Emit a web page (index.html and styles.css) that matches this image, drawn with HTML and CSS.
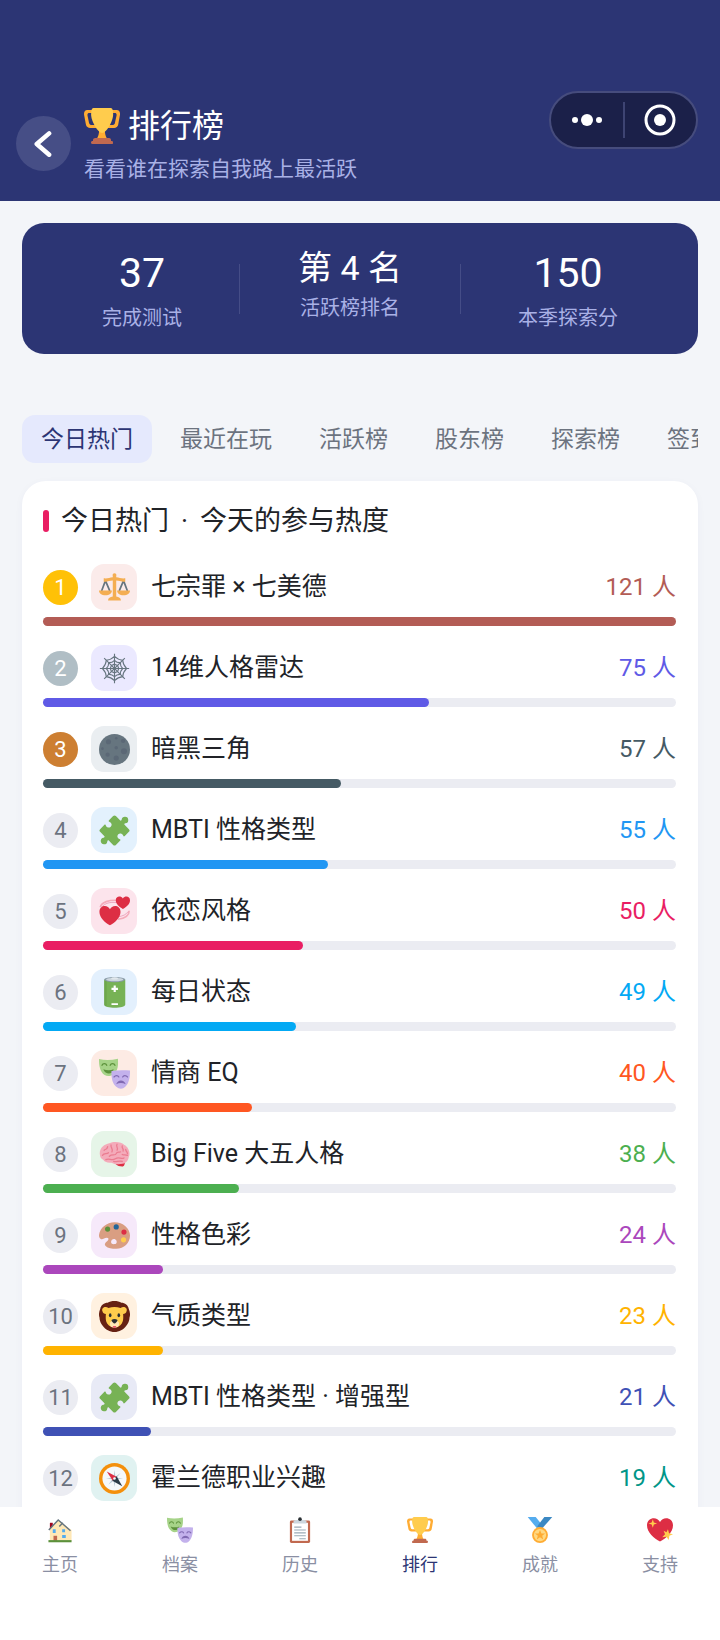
FILE: index.html
```html
<!DOCTYPE html>
<html lang="zh-CN">
<head>
    <meta charset="UTF-8">
    <meta name="viewport" content="width=device-width, initial-scale=1.0">
    <title>排行榜</title>
    <link rel="stylesheet" href="styles.css">
</head>
<body>
    <!-- Icon set -->
    <svg class="sprite" aria-hidden="true">
        <symbol id="trophy" viewBox="0 0 36 36">
            <path fill="#FFAC33" d="M5.123 5h6C12.227 5 13 4.896 13 6V4c0-1.104-.773-2-1.877-2h-8c-2 0-3.583 2.125-3 5 0 0 1.791 9.375 1.917 9.958C2.373 18.5 4.164 20 6.081 20h6.958c1.105 0-.039-1.896-.039-3v-2c0 1.104-.773 2-1.877 2h-4c-1.104 0-1.833-1.042-2-2S3.539 7.667 3.539 7.667C3.206 5.75 4.018 5 5.123 5zm25.812 0h-6C23.831 5 22 4.896 22 6V4c0-1.104 1.831-2 2.935-2h8c2 0 3.584 2.125 3 5 0 0-1.633 9.419-1.771 10-.354 1.5-2.042 3-4 3h-7.146C21.914 20 22 18.104 22 17v-2c0 1.104 1.831 2 2.935 2h4c1.104 0 1.834-1.042 2-2s1.584-7.333 1.584-7.333C32.851 5.75 32.04 5 30.935 5zM20.832 22c0-6.958-2.709 0-2.709 0s-3-6.958-3 0-3.291 10-3.291 10h12.292s-3.292-3.042-3.292-10z"/>
            <path fill="#FFCC4D" d="M29.123 6.577c0 6.775-6.77 18.423-11 18.423-4.231 0-11-11.649-11-18.423 0-5.577 1-6.577 3-6.577h16c2 0 3 .917 3 6.577z"/>
            <path fill="#C1694F" d="M27 33H9v-1c0-1.104 1.164-2 2.206-2h13.917c1.042 0 1.877.896 1.877 2zM8.500 33h19.250c.8 0 1.250.6 1.250 1.400 0 1 0 1.600-1.250 1.600H8.500C7.200 36 7 35.400 7 34.600 7 33.600 7.700 33 8.500 33z"/>
        </symbol>
        <symbol id="scales" viewBox="0 0 36 36">
            <path fill="none" stroke="#66757F" stroke-width="2" d="M7.500 10 3 22M7.500 10l5 12M28.500 10l-5 12M28.500 10 33 22"/>
            <path fill="#F4AE52" d="M16 4.500a2.200 2.200 0 1 1 4 0V6c4 .3 6 2 10.500 1.300v4C26 12 24 10 20 10v18.500c3 .4 5.500 1.600 5.500 4.500h-15c0-2.900 2.500-4.100 5.500-4.500V10c-4 0-6 2-10.500 1.300v-4C10 8 12 6.300 16 6zM0 21.500h15c0 3.500-3 5.500-7.500 5.500S0 25 0 21.500zM21 21.500h15c0 3.500-3 5.500-7.500 5.500s-7.500-2-7.500-5.500z"/>
        </symbol>
        <symbol id="web" viewBox="0 0 36 36">
            <g fill="none" stroke="#66757F" stroke-width="1.300">
                <path d="M18 1v34M1 18h34M6 6l24 24M30 6 6 30"/>
                <path d="M18 4q4 4 9.500 4.500Q28 14 32 18q-4 4-4.500 9.500Q22 28 18 32q-4-4-9.500-4.500Q8 22 4 18q4-4 4.500-9.500Q14 8 18 4z"/>
                <path d="M18 8.500q3 3 6.800 2.700Q24.500 15 27.500 18q-3 3-2.700 6.800Q21 24.500 18 27.500q-3-3-6.800-2.700Q11.500 21 8.500 18q3-3 2.700-6.800Q15 11.500 18 8.500z"/>
                <path d="m18 13 3.500 1.500L23 18l-1.500 3.500L18 23l-3.500-1.500L13 18l1.500-3.500z"/>
            </g>
        </symbol>
        <symbol id="moon" viewBox="0 0 36 36">
            <circle cx="18" cy="18" r="18" fill="#66757F"/>
            <g fill="#5B6876">
                <circle cx="11" cy="9" r="3"/><circle cx="20" cy="5" r="1.500"/><circle cx="28" cy="8" r="2.500"/>
                <circle cx="20" cy="16" r="2"/><circle cx="10" cy="24" r="2.500"/><circle cx="20" cy="28" r="3"/>
                <circle cx="29" cy="20" r="3.500"/><circle cx="4" cy="17" r="1.500"/>
            </g>
        </symbol>
        <symbol id="puzzle" viewBox="2 2 32 32">
            <path fill="#77B255" transform="rotate(45 18 18)" d="M8.500 6.500h6c1.200 0 1.400-.8.8-1.700a3.400 3.400 0 1 1 5.400 0c-.6.900-.4 1.700.8 1.700h6a2 2 0 0 1 2 2v6c0 1.200-.8 1.400-1.700.8a3 3 0 1 0 0 5.400c.9-.6 1.700-.4 1.700.8v6a2 2 0 0 1-2 2h-6c-1.200 0-1.400.8-.8 1.700a3.400 3.400 0 1 1-5.400 0c.6-.9.4-1.700-.8-1.700h-6a2 2 0 0 1-2-2v-6c0-1.200.8-1.400 1.700-.8a3 3 0 1 0 0-5.400c-.9.600-1.700.4-1.700-.8v-6a2 2 0 0 1 2-2z"/>
        </symbol>
        <symbol id="hearts" viewBox="0 0 36 36">
            <path fill="none" stroke="#F4ABBA" stroke-width="2" d="M1.500 13C3 7 12 4.500 21 5M35 17c0 6-6 9-13 10"/>
            <path fill="none" stroke="#EA9CB8" stroke-width="1" d="M3 13c4-5 10-6 17-5.500M34 18c-3 4-6 5-11 6"/>
            <path fill="#DD2E44" d="M25 18.500c0-8.500-10-9-12.300-3C10.500 9.500.5 10 .5 18.500.500 25 7 31 12.700 34 18.500 31 25 25 25 18.500zM36 4.800C36 .1 30-.6 27.700 3 25.500-.6 19.500 0 19.500 5c0 4.500 4 7.500 8.200 10C32 12.500 36 9.300 36 4.800z"/>
        </symbol>
        <symbol id="battery" viewBox="0 0 36 36">
            <path fill="#77B255" d="M6 3h24.500v29c0 5-24.500 5-24.500 0z"/>
            <path fill="#5C913B" d="M6 4v28c0 1 1 2 3 2.500V4z" opacity=".35"/>
            <ellipse cx="18.200" cy="3" rx="12.200" ry="3" fill="#8899A6"/>
            <ellipse cx="18.200" cy="2.800" rx="10" ry="2" fill="#CCD6DD"/>
            <ellipse cx="18.200" cy="1.600" rx="4" ry="1.300" fill="#E1E8ED"/>
            <path fill="#fff" d="M17 10h2.500v2.500H22V15h-2.500v2.500H17V15h-2.500v-2.500H17zM14.500 30.500h7.500v2h-7.500z"/>
        </symbol>
        <symbol id="masks" viewBox="0 0 36 36">
            <path fill="#A6D388" d="M0 1.200C7 2.600 14 2.600 22 .8c.4 8 .2 13.500-5 18-2.800 2.200-7 3-10.500 1C1 16 0 9 0 1.200z"/>
            <path fill="none" stroke="#5C913B" stroke-width="1.500" stroke-linecap="round" d="M3.500 8.500c1-2.500 4.500-2.500 5.500 0M13 8.500c1-2.500 4.500-2.500 5.500 0"/>
            <path fill="#5C913B" d="M5 13c4 1.800 8.500 1.800 12 0-1 6.500-9.500 7-12 0z"/>
            <path fill="#C3B1EC" d="M14.500 15c7-1 14-1 21.500-.5 0 8-1 14.500-5.500 19-3 3-7 3-10.500 0-4.500-4-5.800-10.500-5.500-18.500z"/>
            <path fill="none" stroke="#8069B2" stroke-width="1.500" stroke-linecap="round" d="M17.500 22c1.500-2 4.500-2 5.500 0M27.500 22c1-2 4-2 5.500 0"/>
            <path fill="#8069B2" d="M20 30.500c1.500-6 9.500-6 11 0-3.500-2-7.500-2-11 0z"/>
        </symbol>
        <symbol id="brain" viewBox="0 0 36 36">
            <path fill="#DD2E44" d="M15 27c4 0 5 5 12 5 2.500 0 3-3 3-5z"/>
            <path fill="#F4ABBA" d="M1 18C0 11 6 6 12 5c6-3 15-1 17.500 2C34 9 37 16 34.500 21c-.5 5-4.500 8.500-10 8-4 1-8-.5-10-1.500C9 28 6 26 5 24c-2-.5-4-3-4-6z"/>
            <path fill="none" stroke="#EA7C90" stroke-width="1.500" stroke-linecap="round" d="M4 19c2-3 5-1 7-3M6 13c2-2 3 0 4-4M14 7c-1 3 3 4 1 8M12 20c3-3 7 0 8-3s4-1 5-2M21 6c-2 3 2 4 0 7M27 8c-1 3 2 3 1 6M31 12c0 3 2 2 2 5M8 24c4-2 7 2 11-1s7 1 10-1M17 26c3 1 6-1 10 0M27 18c2 1 4 0 6 1"/>
        </symbol>
        <symbol id="palette" viewBox="0 0 36 36">
            <path fill="#D99E82" d="M18 2.500c10 0 18 7 18 15.500s-7 15.500-16 15.500c-5 0-10-1-12-3-2.500-2.500-.5-4.500 2-6.500 1.500-1.500 1.500-3.500-1-3.500-3 0-4.500 2.500-7 1.500C0 21 0 19 0 17.500 1 9 9 2.500 18 2.500z"/>
            <path fill="#F6E9FA" d="M14 25.500c0-3 3-4 5-3s2.500 5-1 5.500c-2 .2-4-.5-4-2.500z"/>
            <circle cx="10" cy="10.500" r="3" fill="#5C913B"/><circle cx="20" cy="8" r="3" fill="#226699"/>
            <circle cx="29" cy="14" r="3" fill="#DD2E44"/><circle cx="28.500" cy="23" r="3" fill="#FFCC4D"/>
        </symbol>
        <symbol id="lion" viewBox="0 0 36 36">
            <path fill="#662113" d="M10 2C14-.5 22-.5 26 2c4 0 8 3 8.500 7 1.500 3 2 7 1 10 0 4-2 8-4 10-3 4-8 7-13.500 7S7.500 33 4.500 29c-2-2-4-6-4-10C-.5 16 0 12 1.500 9 2 5 6 2 10 2z"/>
            <path fill="#FFCC4D" d="M4 12C2.500 8 7 5.500 11 8c4.500-1.500 9.500-1.500 14 0 4-2.500 8.500 0 7 4-.5 2-2 3-4 3 .5 6 0 8-1.500 11-4 6-13 6-17 0C8 23 7.500 21 8 15c-2 0-3.500-1-4-3z"/>
            <path fill="#FFE8B6" d="M13 25c2-3 8-3 10 0 1 4-1 6-5 6s-6-2-5-6z"/>
            <path fill="#292F33" d="M14.500 22c2-1.500 5-1.500 7 0 0 2-2.500 4-3.500 4s-3.500-2-3.500-4z"/>
            <ellipse cx="13" cy="16.500" rx="1.500" ry="2.300" fill="#292F33"/><ellipse cx="23" cy="16.500" rx="1.500" ry="2.300" fill="#292F33"/>
            <path fill="#EA596E" d="M16 29h4c0 3-4 3-4 0z"/>
        </symbol>
        <symbol id="compass" viewBox="0 0 36 36">
            <circle cx="18" cy="18" r="18" fill="#F4900C"/>
            <circle cx="18" cy="18" r="14" fill="#F5F8FA"/>
            <path fill="#B8C8D3" d="m18 8 1 8 6-4.500-4.500 5.500L28 18l-7.500 1 4.500 6-6-4.500L18 28l-1-7.500-6 4.500 4.500-6L8 18l7.500-1-4.500-5.500 6 4.500z"/>
            <path fill="#DD2E44" d="m9 10 11.500 6-4.500 4.500z"/>
            <path fill="#2B3B47" d="m27 27-11.500-6.500 5-5z"/>
            <circle cx="18" cy="18" r="1.500" fill="#F5F8FA"/>
        </symbol>
        <symbol id="house" viewBox="0 0 36 36">
            <path fill="#A0041E" d="M4 8h4v9H4z"/>
            <path fill="#FFE8B6" d="M4 17 16 4l7 6 11 8v15H4z"/>
            <path fill="none" stroke="#66757F" stroke-width="2" d="M2.500 18 15.500 4l17 15M17 13l5-5"/>
            <path fill="#C1694F" d="M9 26h5v7H9z"/>
            <path fill="#55ACEE" d="M8 17h4v5H8zM21 17h4v4h-4zM21 25h5v4h-5z"/>
            <path fill="#5C913B" d="M2 32h32v3H2z"/>
        </symbol>
        <symbol id="clipboard" viewBox="0 0 36 36">
            <rect x="4" y="5" width="28" height="31" rx="2" fill="#C1694F"/>
            <path fill="#fff" d="M7 8h22v25H7z"/>
            <path fill="none" stroke="#99AAB5" stroke-width="1.500" d="M10 14h10M10 18h16M10 22h16M10 26h16M17 30h9"/>
            <path fill="#CCD6DD" d="M9 9V6c0-1 2-2 5-2h8c3 0 5 1 5 2v3z"/>
            <circle cx="18" cy="3" r="2.500" fill="#292F33"/>
        </symbol>
        <symbol id="medal" viewBox="0 0 36 36">
            <path fill="#55ACEE" d="M1 0h11l9 11-7 5z"/><path fill="#3B88C3" d="M35 0H24L14 13l6 4z"/>
            <circle cx="18" cy="25" r="11" fill="#FFAC33"/><circle cx="18" cy="25" r="8.500" fill="#FFD983"/>
            <path fill="#FFAC33" d="m18 18 2 5h5l-4 3 1.500 5-4.500-3-4.500 3 1.500-5-4-3h5z"/>
        </symbol>
        <symbol id="love" viewBox="0 0 36 36">
            <path fill="#DD2E44" d="M36 11.500C36 .5 22-1.500 18 7 14-1.500 0 .5 0 11.500 0 22 10 29.500 18 34c8-4.500 18-12 18-22.500z"/>
            <path fill="#FFCC4D" d="m8 3 1.500 4.500L14 9l-4.500 1.500L8 15l-1.500-4.500L2 9l4.500-1.500zM29 17l1.500 5.500L36 24l-5 2-1 6-3-4.500-6 .5 4-4-2-5 4 2z"/>
        </symbol>
    </svg>

    <div class="app">
        <header class="header">
            <button class="back" type="button" aria-label="返回">
                <svg viewBox="0 0 24 24"><path d="M17 3 6 12.500 17 22"/></svg>
            </button>
            <div class="heading">
                <h1><svg><use href="#trophy"/></svg>排行榜</h1>
                <p>看看谁在探索自我路上最活跃</p>
            </div>
            <div class="capsule">
                <button type="button" aria-label="更多">
                    <svg viewBox="0 0 32 32"><circle cx="4" cy="16" r="3"/><circle cx="16" cy="16" r="6"/><circle cx="28" cy="16" r="3"/></svg>
                </button>
                <button type="button" aria-label="关闭">
                    <svg viewBox="0 0 32 32"><circle class="ring" cx="16" cy="16" r="14"/><circle cx="16" cy="16" r="6"/></svg>
                </button>
            </div>
        </header>

        <main class="content">
            <!-- My stats -->
            <section class="stats">
                <div class="stat"><strong>37</strong><span>完成测试</span></div>
                <div class="stat stat-rank"><strong>第 4 名</strong><span>活跃榜排名</span></div>
                <div class="stat"><strong>150</strong><span>本季探索分</span></div>
            </section>

            <div class="tabs">
                <button class="tab active" type="button">今日热门</button>
                <button class="tab" type="button">最近在玩</button>
                <button class="tab" type="button">活跃榜</button>
                <button class="tab" type="button">股东榜</button>
                <button class="tab" type="button">探索榜</button>
                <button class="tab" type="button">签到榜</button>
            </div>

            <section class="board">
                <h2><span>今日热门</span> <span>·</span> <span>今天的参与热度</span></h2>
                <ol id="rank-list"></ol>
            </section>
        </main>

        <nav class="tabbar">
            <a href="#"><svg><use href="#house"/></svg>主页</a>
            <a href="#"><svg><use href="#masks"/></svg>档案</a>
            <a href="#"><svg><use href="#clipboard"/></svg>历史</a>
            <a href="#" class="active"><svg><use href="#trophy"/></svg>排行</a>
            <a href="#"><svg><use href="#medal"/></svg>成就</a>
            <a href="#"><svg><use href="#love"/></svg>支持</a>
        </nav>
    </div>

    <script>
        const ranking = [
            { name: "七宗罪 × 七美德", icon: "scales", theme: "brick", count: 121, width: 100 },
            { name: "14维人格雷达", icon: "web", theme: "violet", count: 75, width: 61 },
            { name: "暗黑三角", icon: "moon", theme: "slate", count: 57, width: 47 },
            { name: "MBTI 性格类型", icon: "puzzle", theme: "blue", count: 55, width: 45 },
            { name: "依恋风格", icon: "hearts", theme: "pink", count: 50, width: 41 },
            { name: "每日状态", icon: "battery", theme: "sky", count: 49, width: 40 },
            { name: "情商 EQ", icon: "masks", theme: "orange", count: 40, width: 33 },
            { name: "Big Five 大五人格", icon: "brain", theme: "green", count: 38, width: 31 },
            { name: "性格色彩", icon: "palette", theme: "purple", count: 24, width: 19 },
            { name: "气质类型", icon: "lion", theme: "amber", count: 23, width: 19 },
            { name: "MBTI 性格类型 · 增强型", icon: "puzzle", theme: "indigo", count: 21, width: 17 },
            { name: "霍兰德职业兴趣", icon: "compass", theme: "teal", count: 19, width: 15 }
        ];

        // Render one row per test
        document.getElementById('rank-list').innerHTML = ranking.map((item, i) => `
            <li class="row ${item.theme}">
                <div class="info">
                    <span class="place place-${i + 1}">${i + 1}</span>
                    <span class="tile"><svg><use href="#${item.icon}"/></svg></span>
                    <span class="name">${item.name}</span>
                    <span class="count">${item.count} 人</span>
                </div>
                <div class="track"><div class="fill" style="width: ${item.width}%"></div></div>
            </li>
        `).join('');
    </script>
</body>
</html>
```

FILE: styles.css
```css
* {
    box-sizing: border-box;
}

body {
    margin: 0;
    font-family: Roboto, "Noto Sans CJK SC", sans-serif;
    background: #f3f5f9;
    color: #212328;
}

h1, h2, p, ol {
    margin: 0;
    padding: 0;
    font-weight: 400;
}

button {
    font-family: inherit;
    border: none;
    padding: 0;
    background: none;
    cursor: pointer;
}

.sprite {
    display: none;
}

.app {
    display: flex;
    flex-direction: column;
    height: 100vh;
}

/* Header */
.header {
    position: relative;
    display: flex;
    align-items: center;
    gap: 13px;
    padding: 102px 16px 17px;
    background: #2c3574;
    color: #fff;
}

.back {
    display: flex;
    align-items: center;
    justify-content: center;
    width: 55px;
    height: 55px;
    border-radius: 50%;
    background: #464e86;
}

.back svg {
    width: 27px;
    height: 27px;
    fill: none;
    stroke: #fff;
    stroke-width: 4;
    stroke-linecap: round;
    stroke-linejoin: round;
}

.heading h1 {
    display: flex;
    align-items: center;
    gap: 8px;
    font-size: 32px;
    line-height: 48px;
}

.heading h1 svg {
    width: 36px;
    height: 36px;
}

.heading p {
    margin-top: 4px;
    font-size: 21px;
    line-height: 30px;
    color: #a9b1e6;
}

.capsule {
    position: absolute;
    top: 91px;
    right: 22px;
    display: flex;
    align-items: center;
    width: 149px;
    height: 58px;
    border: 2px solid #464c7d;
    border-radius: 29px;
    background: #1b2049;
}

.capsule button {
    flex: 1;
    height: 36px;
}

.capsule button + button {
    border-left: 2px solid #3e4473;
}

.capsule svg {
    width: 32px;
    height: 32px;
    vertical-align: middle;
    fill: #fff;
}

.capsule .ring {
    fill: none;
    stroke: #fff;
    stroke-width: 3;
}

.content {
    flex: 1;
    min-height: 0;
    padding: 22px 22px 0;
    overflow: hidden;
}

/* Stats card */
.stats {
    display: flex;
    justify-content: space-between;
    padding: 22px 80px;
    border-radius: 22px;
    background: #2c3574;
    color: #fff;
}

.stat {
    position: relative;
    display: flex;
    flex-direction: column;
    align-items: center;
    gap: 4px;
}

.stat strong {
    font-size: 41px;
    font-weight: 400;
    line-height: 56px;
}

.stat span {
    font-size: 20px;
    line-height: 27px;
    color: #a9b1e6;
}

.stat-rank strong {
    font-size: 34px;
    line-height: 46px;
}

/* dividers on both sides of the rank */
.stat-rank::before,
.stat-rank::after {
    content: "";
    position: absolute;
    top: 19px;
    width: 1px;
    height: 50px;
    background: #454d87;
}

.stat-rank::before {
    left: -59px;
}

.stat-rank::after {
    right: -59px;
}

/* Tabs */
.tabs {
    display: flex;
    gap: 9px;
    margin-top: 61px;
    overflow: hidden;
}

.tab {
    flex: none;
    padding: 2px 19px 0;
    border-radius: 13px;
    font-size: 23px;
    line-height: 46px;
    color: #6c737f;
}

.tab.active {
    background: #e5e9fd;
    color: #2c3574;
}

/* Ranking */
.board {
    margin-top: 18px;
    padding: 21px 22px 21px 21px;
    border-radius: 24px;
    background: #fff;
    box-shadow: 0 2px 8px rgba(44, 53, 116, 0.04);
}

.board h2 {
    display: flex;
    align-items: center;
    gap: 12px;
    margin-bottom: 24px;
    font-size: 27px;
    line-height: 38px;
}

.board h2::before {
    content: "";
    width: 6px;
    height: 22px;
    border-radius: 3px;
    background: #e91e63;
}

.board ol {
    list-style: none;
}

.row {
    margin-bottom: 19px;
}

.info {
    display: flex;
    align-items: center;
    gap: 13px;
    height: 46px;
    margin-bottom: 7px;
    font-size: 25px;
    line-height: 34px;
}

.place {
    width: 35px;
    border-radius: 50%;
    background: #ebecf2;
    color: #6c737f;
    font-size: 22px;
    line-height: 35px;
    text-align: center;
}

.place-1, .place-2, .place-3 {
    color: #fff;
}

.place-1 {
    background: #ffc107;
}

.place-2 {
    background: #b0bec5;
}

.place-3 {
    background: #cd7f32;
}

.tile {
    display: flex;
    align-items: center;
    justify-content: center;
    width: 46px;
    height: 46px;
    border-radius: 13px;
    background: var(--tint);
}

.tile svg {
    width: 31px;
    height: 31px;
}

.name {
    flex: 1;
    padding-left: 1px;
}

.count {
    font-size: 24px;
    color: var(--color);
}

.track {
    height: 9px;
    border-radius: 5px;
    background: #ebecf2;
}

.fill {
    height: 100%;
    border-radius: 5px;
    background: var(--color);
}

.brick { --color: #b35c55; --tint: #fbebea; }
.violet { --color: #5f5ae6; --tint: #ebe9ff; }
.slate { --color: #455a64; --tint: #eaeef1; }
.blue { --color: #2196f3; --tint: #e3f1fd; }
.pink { --color: #e91e63; --tint: #fce4ec; }
.sky { --color: #03a9f4; --tint: #e3f0fd; }
.orange { --color: #ff5722; --tint: #fdebe4; }
.green { --color: #4caf50; --tint: #e6f5e8; }
.purple { --color: #ab47bc; --tint: #f6e9fa; }
.amber { --color: #ffb300; --tint: #fff1e0; }
.indigo { --color: #3f51b5; --tint: #e8eaf6; }
.teal { --color: #009688; --tint: #e0f2f1; }

/* Bottom navigation */
.tabbar {
    display: flex;
    flex: none;
    height: 133px;
    padding-top: 10px;
    background: #fff;
}

.tabbar a {
    display: flex;
    flex: 1;
    flex-direction: column;
    align-items: center;
    gap: 10px;
    font-size: 18px;
    line-height: 24px;
    color: #8a8fa3;
    text-decoration: none;
}

.tabbar svg {
    width: 26px;
    height: 26px;
}

.tabbar .active {
    color: #2c3574;
}
```
